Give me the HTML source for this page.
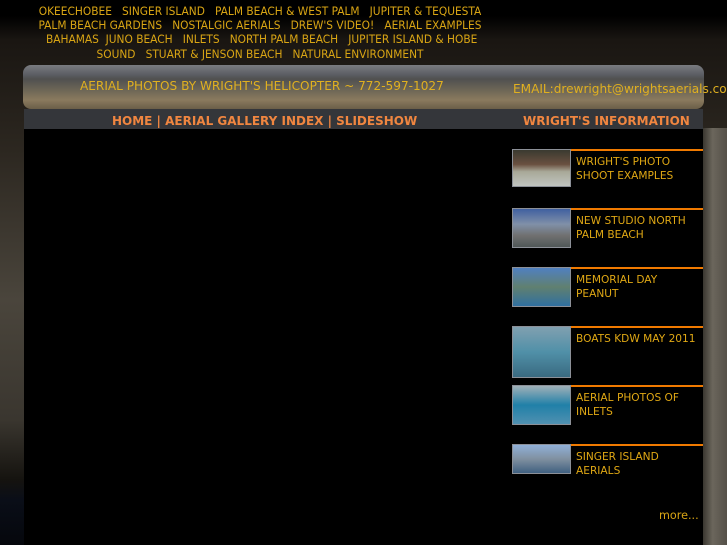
<!DOCTYPE html>
<html><head><style>
body{margin:0;width:727px;height:545px;overflow:hidden;font-family:"DejaVu Sans","Liberation Sans",sans-serif;
background:linear-gradient(to bottom,#000 0,#000 16px,#1a1612 40px,#2c2720 150px,#4a453c 300px,#3a362f 420px,#15130f 480px,#0a0e18 500px,#05070c 545px);position:relative}
.top{position:absolute;left:0;width:520px;top:4px;text-align:center;color:#d9a514;font-family:"DejaVu Sans Condensed","DejaVu Sans",sans-serif;font-stretch:condensed;font-size:11.8px;line-height:14.2px;white-space:nowrap}
.top div{white-space:nowrap}
.side{position:absolute;left:703px;top:128px;width:24px;height:417px;background:linear-gradient(to right,#3a3730,#6b665c 40%,#555048)}
.hdr{position:absolute;left:23px;top:65px;width:681px;height:44px;border-radius:8px;background:linear-gradient(to bottom,#7a7c80 0,#5a5c62 10px,#505050 14px,#6d6656 25px,#8a7a5e 35px,#6a5e48 44px)}
.hdr span{position:absolute;color:#e0b020;font-size:12.1px;white-space:nowrap}
.nav{position:absolute;left:24px;top:109px;width:679px;height:20px;background:#34363a}
.nav span{position:absolute;top:5px;color:#f08640;font-size:12px;font-weight:bold;white-space:nowrap}
.main{position:absolute;left:24px;top:129px;width:679px;height:416px;background:#000}
.it{position:absolute;left:488px;width:191px;height:55px}
.it .th{position:absolute;left:0;top:0;width:57px;border:1px solid #8c9098}
.it .ln{position:absolute;left:59px;top:0;right:0;height:2px;background:#f07a00}
.it .tx{position:absolute;left:64px;top:6px;color:#e0a814;font-size:10.6px;line-height:14px;white-space:nowrap}
.more{position:absolute;left:635px;top:380px;color:#d9a514;font-size:11.2px}
</style></head><body>
<div class="top"><div>OKEECHOBEE &nbsp; SINGER ISLAND &nbsp; PALM BEACH &amp; WEST PALM &nbsp; JUPITER &amp; TEQUESTA</div><div>PALM BEACH GARDENS &nbsp; NOSTALGIC AERIALS &nbsp; DREW'S VIDEO! &nbsp; AERIAL EXAMPLES</div><div>&nbsp;BAHAMAS &nbsp;JUNO BEACH &nbsp; INLETS &nbsp; NORTH PALM BEACH &nbsp; JUPITER ISLAND &amp; HOBE</div><div>SOUND &nbsp; STUART &amp; JENSON BEACH &nbsp; NATURAL ENVIRONMENT</div></div>
<div class="side"></div>
<div class="hdr"><span style="left:57px;top:14px">AERIAL PHOTOS BY WRIGHT'S HELICOPTER ~ 772-597-1027</span><span style="left:490px;top:17px">EMAIL:drewright@wrightsaerials.com</span></div>
<div class="nav"><span style="left:88px">HOME | AERIAL GALLERY INDEX | SLIDESHOW</span><span style="left:499px">WRIGHT'S INFORMATION</span></div>
<div class="main">
<div class="it" style="top:20px"><div class="th" style="height:36px;background:linear-gradient(#3a3a30,#6a5040 40%,#a8a898 60%,#c0c4c0)"></div><div class="ln"></div><div class="tx">WRIGHT'S PHOTO<br>SHOOT EXAMPLES</div></div>
<div class="it" style="top:79px"><div class="th" style="height:38px;background:linear-gradient(#4060a0,#8090a8 40%,#707070 70%,#505858)"></div><div class="ln"></div><div class="tx">NEW STUDIO NORTH<br>PALM BEACH</div></div>
<div class="it" style="top:138px"><div class="th" style="height:38px;background:linear-gradient(#5080c0,#608070 50%,#3070a0)"></div><div class="ln"></div><div class="tx">MEMORIAL DAY<br>PEANUT</div></div>
<div class="it" style="top:197px"><div class="th" style="height:50px;background:linear-gradient(#80a0b0,#5090a8 50%,#3a6a80)"></div><div class="ln"></div><div class="tx">BOATS KDW MAY 2011</div></div>
<div class="it" style="top:256px"><div class="th" style="height:38px;background:linear-gradient(#a0b0b8,#2080a8 50%,#5090b0)"></div><div class="ln"></div><div class="tx">AERIAL PHOTOS OF<br>INLETS</div></div>
<div class="it" style="top:315px"><div class="th" style="height:28px;background:linear-gradient(#90b0d8,#8090a0 50%,#406080)"></div><div class="ln"></div><div class="tx">SINGER ISLAND<br>AERIALS</div></div>
<div class="more">more...</div>
</div>
</body></html>
